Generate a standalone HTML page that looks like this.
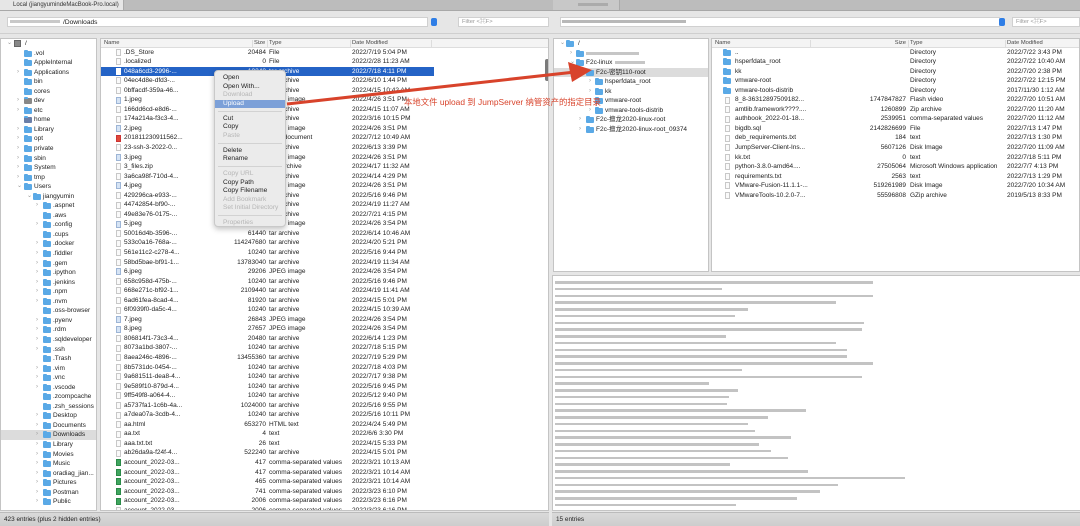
<!DOCTYPE html>
<html><head><meta charset="utf-8">
<style>
*{margin:0;padding:0;box-sizing:border-box}
body{width:1080px;height:526px;overflow:hidden;background:#e6e6e6;font-family:"Liberation Sans","Noto Sans CJK SC",sans-serif;font-size:6.5px;color:#222;position:relative}
.a{position:absolute}
.panel{position:absolute;background:#fff;border:1px solid #c4c4c4;overflow:hidden}
.r{position:relative;height:9.56px;line-height:9.56px;white-space:nowrap}
.r>*{position:absolute;top:0;font-style:normal;font-weight:normal;text-decoration:none}
.f{display:block;width:8px;height:6px;background:#5aa9e6;top:2px;border-radius:1px}
.f:before{content:"";position:absolute;left:0;top:-1px;width:4px;height:2px;background:#5aa9e6;border-radius:1px 1px 0 0}
.d{display:block;width:5px;height:7px;border:1px solid #c8c8c8;background:#fafafa;top:1.3px}
.g{background:#3fa55e;border-color:#2b8a48}
.p{background:#e04a3a;border-color:#c33}
.j{background:#d6e4f5;border-color:#9db5d6}
.ch{color:#999;font-size:6px}
.hdr{height:9px;line-height:9px;background:#f4f4f4;border-bottom:1px solid #ddd;position:relative;font-size:5.8px;color:#444}
.hdr span{position:absolute;top:0}
.hdr i{position:absolute;top:1px;width:1px;height:7px;background:#ddd}
.sel{background:#2463c6;color:#fff}
.sel .d{border-color:#fff;background:#fff}
.menu{position:absolute;left:214px;top:70px;width:72px;height:157px;background:#ebebeb;border:1px solid #c9c9c9;border-radius:4px;box-shadow:0 2px 6px rgba(0,0,0,.25);font-size:6.6px}
.menu div{height:8.6px;line-height:8.6px;padding-left:8px}
.menu .x{color:#b5b5b5}
.menu .h{background:#7ca0d8;color:#fff}
.menu hr{border:0;border-top:1px solid #d2d2d2;margin:2.6px 3px}
.lg{position:absolute;left:555px;height:2.6px;background:#b9b9b9;opacity:.85}
</style></head><body>
<!-- tab bar -->
<div class="a" style="left:0;top:0;width:1080px;height:10px;background:#bcbcbc"></div>
<div class="a" style="left:0;top:0;width:124px;height:10px;background:#e6e6e6;border-right:1px solid #aaa;font-size:6px;line-height:10px;padding-left:13px;color:#333">Local (jiangyumindeMacBook-Pro.local)</div>
<div class="a" style="left:553px;top:0;width:67px;height:10px;background:#c8c8c8;border-right:1px solid #aaa"></div>
<div class="a" style="left:578px;top:3px;width:30px;height:3px;background:#ababab"></div>
<div class="a" style="left:0;top:10px;width:1080px;height:1px;background:#a8a8a8"></div>
<!-- path inputs -->
<div class="a" style="left:7px;top:17px;width:421px;height:10px;background:#fff;border:1px solid #d0d0d0;font-size:6.6px;line-height:9px;padding-left:55px">/Downloads</div>
<div class="a" style="left:10px;top:20px;width:50px;height:3px;background:#c9c9c9"></div>
<div class="a" style="left:431px;top:18px;width:6px;height:8px;background:#2f7ee6;border-radius:2px"></div>
<div class="a" style="left:458px;top:17px;width:91px;height:10px;background:#fff;border:1px solid #d0d0d0;font-size:5.8px;line-height:9px;padding-left:3px;color:#999">Filter &lt;⌘F&gt;</div>
<div class="a" style="left:560px;top:17px;width:440px;height:10px;background:#fff;border:1px solid #d0d0d0"></div>
<div class="a" style="left:562px;top:20px;width:124px;height:3px;background:#b8b8b8"></div>
<div class="a" style="left:999px;top:18px;width:6px;height:8px;background:#2f7ee6;border-radius:2px"></div>
<div class="a" style="left:1012px;top:17px;width:68px;height:10px;background:#fff;border:1px solid #d0d0d0;font-size:5.8px;line-height:9px;padding-left:3px;color:#999">Filter &lt;⌘F&gt;</div>
<div class="a" style="left:0;top:33px;width:1080px;height:1px;background:#cfcfcf"></div>

<!-- left tree -->
<div class="panel" style="left:0;top:38px;width:97px;height:473px;padding-top:0">
<div class="r"><em class="ch" style="left:6px">⌄</em><i class="d" style="left:13px;width:7px;background:#888;border-color:#666"></i><b style="left:24px">/</b></div>
<div class="r"><i class="f" style="left:23px"></i><b style="left:33px">.vol</b></div>
<div class="r"><i class="f" style="left:23px"></i><b style="left:33px">AppleInternal</b></div>
<div class="r"><em class="ch" style="left:16px">›</em><i class="f" style="left:23px"></i><b style="left:33px">Applications</b></div>
<div class="r"><i class="f" style="left:23px"></i><b style="left:33px">bin</b></div>
<div class="r"><i class="f" style="left:23px"></i><b style="left:33px">cores</b></div>
<div class="r"><em class="ch" style="left:16px">›</em><i class="f" style="left:23px;background:#888"></i><b style="left:33px">dev</b></div>
<div class="r"><em class="ch" style="left:16px">›</em><i class="f" style="left:23px"></i><b style="left:33px">etc</b></div>
<div class="r"><i class="f" style="left:23px;background:#6b7fa8"></i><b style="left:33px">home</b></div>
<div class="r"><em class="ch" style="left:16px">›</em><i class="f" style="left:23px"></i><b style="left:33px">Library</b></div>
<div class="r"><em class="ch" style="left:16px">›</em><i class="f" style="left:23px"></i><b style="left:33px">opt</b></div>
<div class="r"><em class="ch" style="left:16px">›</em><i class="f" style="left:23px"></i><b style="left:33px">private</b></div>
<div class="r"><em class="ch" style="left:16px">›</em><i class="f" style="left:23px"></i><b style="left:33px">sbin</b></div>
<div class="r"><em class="ch" style="left:16px">›</em><i class="f" style="left:23px"></i><b style="left:33px">System</b></div>
<div class="r"><em class="ch" style="left:16px">›</em><i class="f" style="left:23px"></i><b style="left:33px">tmp</b></div>
<div class="r"><em class="ch" style="left:16px">⌄</em><i class="f" style="left:23px"></i><b style="left:33px">Users</b></div>
<div class="r"><em class="ch" style="left:26px">⌄</em><i class="f" style="left:32px"></i><b style="left:42px">jiangyumin</b></div>
<div class="r"><em class="ch" style="left:35px">›</em><i class="f" style="left:42px"></i><b style="left:52px">.aspnet</b></div>
<div class="r"><i class="f" style="left:42px"></i><b style="left:52px">.aws</b></div>
<div class="r"><em class="ch" style="left:35px">›</em><i class="f" style="left:42px"></i><b style="left:52px">.config</b></div>
<div class="r"><i class="f" style="left:42px"></i><b style="left:52px">.cups</b></div>
<div class="r"><em class="ch" style="left:35px">›</em><i class="f" style="left:42px"></i><b style="left:52px">.docker</b></div>
<div class="r"><em class="ch" style="left:35px">›</em><i class="f" style="left:42px"></i><b style="left:52px">.fiddler</b></div>
<div class="r"><em class="ch" style="left:35px">›</em><i class="f" style="left:42px"></i><b style="left:52px">.gem</b></div>
<div class="r"><em class="ch" style="left:35px">›</em><i class="f" style="left:42px"></i><b style="left:52px">.ipython</b></div>
<div class="r"><em class="ch" style="left:35px">›</em><i class="f" style="left:42px"></i><b style="left:52px">.jenkins</b></div>
<div class="r"><em class="ch" style="left:35px">›</em><i class="f" style="left:42px"></i><b style="left:52px">.npm</b></div>
<div class="r"><em class="ch" style="left:35px">›</em><i class="f" style="left:42px"></i><b style="left:52px">.nvm</b></div>
<div class="r"><i class="f" style="left:42px"></i><b style="left:52px">.oss-browser</b></div>
<div class="r"><em class="ch" style="left:35px">›</em><i class="f" style="left:42px"></i><b style="left:52px">.pyenv</b></div>
<div class="r"><em class="ch" style="left:35px">›</em><i class="f" style="left:42px"></i><b style="left:52px">.rdm</b></div>
<div class="r"><em class="ch" style="left:35px">›</em><i class="f" style="left:42px"></i><b style="left:52px">.sqldeveloper</b></div>
<div class="r"><em class="ch" style="left:35px">›</em><i class="f" style="left:42px"></i><b style="left:52px">.ssh</b></div>
<div class="r"><i class="f" style="left:42px"></i><b style="left:52px">.Trash</b></div>
<div class="r"><em class="ch" style="left:35px">›</em><i class="f" style="left:42px"></i><b style="left:52px">.vim</b></div>
<div class="r"><em class="ch" style="left:35px">›</em><i class="f" style="left:42px"></i><b style="left:52px">.vnc</b></div>
<div class="r"><em class="ch" style="left:35px">›</em><i class="f" style="left:42px"></i><b style="left:52px">.vscode</b></div>
<div class="r"><i class="f" style="left:42px"></i><b style="left:52px">.zcompcache</b></div>
<div class="r"><i class="f" style="left:42px"></i><b style="left:52px">.zsh_sessions</b></div>
<div class="r"><em class="ch" style="left:35px">›</em><i class="f" style="left:42px"></i><b style="left:52px">Desktop</b></div>
<div class="r"><em class="ch" style="left:35px">›</em><i class="f" style="left:42px"></i><b style="left:52px">Documents</b></div>
<div class="r" style="background:#dcdcdc"><em class="ch" style="left:35px">›</em><i class="f" style="left:42px"></i><b style="left:52px">Downloads</b></div>
<div class="r"><em class="ch" style="left:35px">›</em><i class="f" style="left:42px"></i><b style="left:52px">Library</b></div>
<div class="r"><em class="ch" style="left:35px">›</em><i class="f" style="left:42px"></i><b style="left:52px">Movies</b></div>
<div class="r"><em class="ch" style="left:35px">›</em><i class="f" style="left:42px"></i><b style="left:52px">Music</b></div>
<div class="r"><em class="ch" style="left:35px">›</em><i class="f" style="left:42px"></i><b style="left:52px">oradiag_jian...</b></div>
<div class="r"><em class="ch" style="left:35px">›</em><i class="f" style="left:42px"></i><b style="left:52px">Pictures</b></div>
<div class="r"><em class="ch" style="left:35px">›</em><i class="f" style="left:42px"></i><b style="left:52px">Postman</b></div>
<div class="r"><em class="ch" style="left:35px">›</em><i class="f" style="left:42px"></i><b style="left:52px">Public</b></div>
</div>

<!-- left list -->
<div class="panel" style="left:100px;top:38px;width:449px;height:473px">
<div class="hdr"><span style="left:3px">Name</span><i style="left:151px"></i><span style="left:153px;width:11px;text-align:right">Size</span><i style="left:166px"></i><span style="left:168px">Type</span><i style="left:249px"></i><span style="left:251px">Date Modified</span><i style="left:330px"></i></div>
<div id="L" style="position:relative;top:-0.5px"></div>
<div class="a" style="left:444px;top:20px;width:4px;height:22px;background:#7a7a7a;border-radius:2px"></div>
</div>

<!-- right tree -->
<div class="panel" style="left:553px;top:38px;width:156px;height:234px">
<div class="r"><em class="ch" style="left:6px">⌄</em><i class="f" style="left:12px"></i><b style="left:24px">/</b></div>
<div class="r"><em class="ch" style="left:16px">›</em><i class="f" style="left:22px"></i><b style="left:32px;top:3px;width:53px;height:3px;background:#c6c6c6"></b></div>
<div class="r"><em class="ch" style="left:16px">⌄</em><i class="f" style="left:22px"></i><b style="left:32px">F2c-linux</b><b style="left:61px;top:3px;width:30px;height:3px;background:#c6c6c6"></b></div>
<div class="r" style="background:#dcdcdc"><em class="ch" style="left:25px">⌄</em><i class="f" style="left:32px"></i><b style="left:42px">F2c-密钥110-root</b></div>
<div class="r"><em class="ch" style="left:35px">›</em><i class="f" style="left:41px"></i><b style="left:51px">hsperfdata_root</b></div>
<div class="r"><em class="ch" style="left:35px">›</em><i class="f" style="left:41px"></i><b style="left:51px">kk</b></div>
<div class="r"><em class="ch" style="left:35px">›</em><i class="f" style="left:41px"></i><b style="left:51px">vmware-root</b></div>
<div class="r"><em class="ch" style="left:35px">›</em><i class="f" style="left:41px"></i><b style="left:51px">vmware-tools-distrib</b></div>
<div class="r"><em class="ch" style="left:25px">›</em><i class="f" style="left:32px"></i><b style="left:42px">F2c-擅龙2020-linux-root</b></div>
<div class="r"><em class="ch" style="left:25px">›</em><i class="f" style="left:32px"></i><b style="left:42px">F2c-擅龙2020-linux-root_09374</b></div>
</div>

<!-- right list -->
<div class="panel" style="left:711px;top:38px;width:369px;height:234px">
<div class="hdr"><span style="left:3px">Name</span><i style="left:98px"></i><span style="left:180px;width:14px;text-align:right">Size</span><i style="left:196px"></i><span style="left:198px">Type</span><i style="left:293px"></i><span style="left:295px">Date Modified</span></div>
<div id="R" style="position:relative;top:-0.5px"></div>
</div>

<!-- log -->
<div class="panel" style="left:552px;top:275px;width:528px;height:236px;border-right:0"></div>
<div id="G"></div>

<!-- status bars -->
<div class="a" style="left:0;top:512px;width:549px;height:14px;background:linear-gradient(#dadada,#cdcdcd);border-top:1px solid #bbb;font-size:6.4px;line-height:13px;padding-left:4px">423 entries (plus 2 hidden entries)</div>
<div class="a" style="left:552px;top:512px;width:528px;height:14px;background:linear-gradient(#dadada,#cdcdcd);border-top:1px solid #bbb;font-size:6.4px;line-height:13px;padding-left:4px">15 entries</div>

<!-- context menu -->
<div class="menu"><div style="height:3px"></div>
<div>Open</div><div>Open With...</div><div class="x">Download</div><div class="h">Upload</div><hr>
<div>Cut</div><div>Copy</div><div class="x">Paste</div><hr>
<div>Delete</div><div>Rename</div><hr>
<div class="x">Copy URL</div><div>Copy Path</div><div>Copy Filename</div><div class="x">Add Bookmark</div><div class="x">Set Initial Directory</div><hr>
<div class="x">Properties</div></div>

<!-- arrow -->
<svg class="a" style="left:0;top:0" width="1080" height="526">
<line x1="287" y1="104" x2="575" y2="72" stroke="#d8432b" stroke-width="3"/>
<polygon points="592,70 568,62 572,82" fill="#d8432b"/>
</svg>
<div class="a" style="left:404px;top:96px;font-size:8.4px;color:#d8432b;white-space:nowrap">本地文件 upload 到 JumpServer 纳管资产的指定目录</div>

<script>
var L=[
["d",".DS_Store","20484","File","2022/7/19 5:04 PM"],
["d",".localized","0","File","2022/2/28 11:23 AM"],
["s","048a6cd3-2996-...","10240","tar archive","2022/7/18 4:11 PM"],
["d","04ec4d8e-dfd3-...","10240","tar archive","2022/6/10 1:44 PM"],
["d","0bffacdf-359a-46...","10240","tar archive","2022/4/15 10:42 AM"],
["j","1.jpeg","29206","JPEG image","2022/4/26 3:51 PM"],
["d","166dd6cd-e8d6-...","10240","tar archive","2022/4/15 11:07 AM"],
["d","174a214a-f3c3-4...","10240","tar archive","2022/3/16 10:15 PM"],
["j","2.jpeg","29206","JPEG image","2022/4/26 3:51 PM"],
["p","201811230911562...","88541","PDF document","2022/7/12 10:49 AM"],
["d","23-ssh-3-2022-0...","10240","tar archive","2022/6/13 3:39 PM"],
["j","3.jpeg","29206","JPEG image","2022/4/26 3:51 PM"],
["d","3_files.zip","20480","ZIP archive","2022/4/17 11:32 AM"],
["d","3a6ca98f-710d-4...","10240","tar archive","2022/4/14 4:29 PM"],
["j","4.jpeg","29206","JPEG image","2022/4/26 3:51 PM"],
["d","429296ca-e933-...","10240","tar archive","2022/5/16 9:46 PM"],
["d","44742854-bf90-...","10240","tar archive","2022/4/19 11:27 AM"],
["d","49e83e76-0175-...","10240","tar archive","2022/7/21 4:15 PM"],
["j","5.jpeg","29206","JPEG image","2022/4/26 3:54 PM"],
["d","50016d4b-3596-...","61440","tar archive","2022/6/14 10:46 AM"],
["d","533c0a16-768a-...","114247680","tar archive","2022/4/20 5:21 PM"],
["d","561e11c2-c278-4...","10240","tar archive","2022/5/16 9:44 PM"],
["d","58bd5bae-bf91-1...","13783040","tar archive","2022/4/19 11:34 AM"],
["j","6.jpeg","29206","JPEG image","2022/4/26 3:54 PM"],
["d","658c958d-475b-...","10240","tar archive","2022/5/16 9:46 PM"],
["d","668e271c-bf92-1...","2109440","tar archive","2022/4/19 11:41 AM"],
["d","6ad61fea-8cad-4...","81920","tar archive","2022/4/15 5:01 PM"],
["d","6f0939f0-da5c-4...","10240","tar archive","2022/4/15 10:39 AM"],
["j","7.jpeg","26843","JPEG image","2022/4/26 3:54 PM"],
["j","8.jpeg","27657","JPEG image","2022/4/26 3:54 PM"],
["d","806814f1-73c3-4...","20480","tar archive","2022/6/14 1:23 PM"],
["d","8073a1bd-3807-...","10240","tar archive","2022/7/18 5:15 PM"],
["d","8aea246c-4896-...","13455360","tar archive","2022/7/19 5:29 PM"],
["d","8b5731dc-0454-...","10240","tar archive","2022/7/18 4:03 PM"],
["d","9a681511-dea8-4...","10240","tar archive","2022/7/17 9:38 PM"],
["d","9e589f10-879d-4...","10240","tar archive","2022/5/16 9:45 PM"],
["d","9ff549f8-a064-4...","10240","tar archive","2022/5/12 9:40 PM"],
["d","a5737fa1-1c6b-4a...","1024000","tar archive","2022/5/16 9:55 PM"],
["d","a7dea07a-3cdb-4...","10240","tar archive","2022/5/16 10:11 PM"],
["d","aa.html","653270","HTML text","2022/4/24 5:49 PM"],
["d","aa.txt","4","text","2022/6/6 3:30 PM"],
["d","aaa.txt.txt","26","text","2022/4/15 5:33 PM"],
["d","ab26da9a-f24f-4...","522240","tar archive","2022/4/15 5:01 PM"],
["g","account_2022-03...","417","comma-separated values","2022/3/21 10:13 AM"],
["g","account_2022-03...","417","comma-separated values","2022/3/21 10:14 AM"],
["g","account_2022-03...","465","comma-separated values","2022/3/21 10:14 AM"],
["g","account_2022-03...","741","comma-separated values","2022/3/23 6:10 PM"],
["g","account_2022-03...","2006","comma-separated values","2022/3/23 6:16 PM"],
["d","account_2022-03...","2006","comma-separated values","2022/3/23 6:16 PM"]];
var h="";L.forEach(function(r){var c=r[0]=="s"?' class="r sel"':' class="r"';var ic=r[0]=="s"||r[0]=="d"?"d":"d "+r[0];
h+='<div'+c+(r[0]=="s"?' style="width:333px"':'')+'><i class="'+ic+'" style="left:15px"></i><b style="left:23px">'+r[1]+'</b><s style="left:120px;width:45px;text-align:right">'+r[2]+'</s><u style="left:168px">'+r[3]+'</u><em style="left:251px">'+r[4]+'</em></div>';});
document.getElementById("L").innerHTML=h;
var R=[["f","..","","Directory","2022/7/22 3:43 PM"],["f","hsperfdata_root","","Directory","2022/7/22 10:40 AM"],["f","kk","","Directory","2022/7/20 2:38 PM"],["f","vmware-root","","Directory","2022/7/22 12:15 PM"],["f","vmware-tools-distrib","","Directory","2017/11/30 1:12 AM"],
["d","8_8-36312897509182...","1747847827","Flash video","2022/7/20 10:51 AM"],["d","amtlib.framework????....","1260899","Zip archive","2022/7/20 11:20 AM"],["d","authbook_2022-01-18...","2539951","comma-separated values","2022/7/20 11:12 AM"],["d","bigdb.sql","2142826699","File","2022/7/13 1:47 PM"],["d","deb_requirements.txt","184","text","2022/7/13 1:30 PM"],["d","JumpServer-Client-Ins...","5607126","Disk Image","2022/7/20 11:09 AM"],["d","kk.txt","0","text","2022/7/18 5:11 PM"],["d","python-3.8.0-amd64....","27505064","Microsoft Windows application","2022/7/7 4:13 PM"],["d","requirements.txt","2563","text","2022/7/13 1:29 PM"],["d","VMware-Fusion-11.1.1-...","519261989","Disk Image","2022/7/20 10:34 AM"],["d","VMwareTools-10.2.0-7...","55596808","GZip archive","2019/5/13 8:33 PM"]];
h="";R.forEach(function(r){h+='<div class="r"><i class="'+r[0]+'" style="left:'+(r[0]=="f"?11:13)+'px"></i><b style="left:23px">'+r[1]+'</b><s style="left:130px;width:64px;text-align:right">'+r[2]+'</s><u style="left:198px">'+r[3]+'</u><em style="left:295px">'+r[4]+'</em></div>';});
document.getElementById("R").innerHTML=h;
var W=[873,722,873,836,748,735,864,862,726,836,847,847,873,742,862,709,738,729,727,806,768,748,755,791,759,771,788,730,808,905,838,820,797,736];
h="";W.forEach(function(w,i){h+='<div class="lg" style="top:'+(281+i*6.75)+'px;width:'+(w-555)+'px"></div>';});
document.getElementById("G").innerHTML=h;
</script>
</body></html>
